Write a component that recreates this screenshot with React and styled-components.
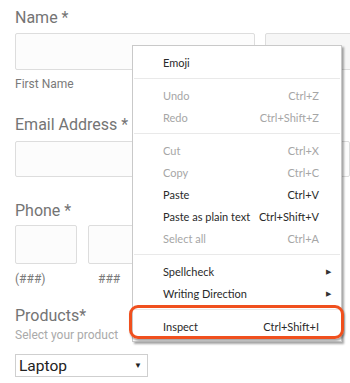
import styled, { createGlobalStyle } from 'styled-components'

const Global = createGlobalStyle`
  html, body {
    margin: 0;
    padding: 0;
    background: #fff;
    overflow: hidden;
  }
  body {
    width: 350px;
    height: 383px;
    font-family: Roboto, "Liberation Sans", sans-serif;
  }
`

const Page = styled.div`
  position: relative;
  width: 350px;
  height: 383px;
  overflow: hidden;
`

const Form = styled.div`
  display: flex;
  flex-direction: column;
  padding: 8px 0 0 15px;
`

const Label = styled.div`
  font-size: 16px;
  line-height: 20px;
  color: #747474;
  margin-top: ${p => p.top || 0}px;
`

const Row = styled.div`
  display: flex;
  gap: ${p => p.gap || 10}px;
  margin-top: ${p => p.top || 0}px;
`

const Box = styled.div`
  flex: none;
  width: ${p => p.w}px;
  height: ${p => p.h || 37}px;
  box-sizing: border-box;
  border: 1px solid #ddd;
  border-radius: 2px;
  background: ${p => p.shade ? '#f6f6f6' : '#fcfcfc'};
`

const Caption = styled.div`
  font-size: 12px;
  line-height: 14px;
  color: ${p => p.light ? '#aaa' : '#7a7a7a'};
  width: ${p => p.w ? p.w + 'px' : 'auto'};
`

const Select = styled.div`
  display: flex;
  align-items: center;
  justify-content: space-between;
  width: 133px;
  height: 23px;
  box-sizing: border-box;
  margin-top: 12px;
  padding: 0 5px 0 3px;
  border: 1px solid #cfcfcf;
  font-size: 15.5px;
  color: #222;
  span:last-child {
    font-size: 8px;
  }
`

const Menu = styled.div`
  position: absolute;
  left: 132px;
  top: 45px;
  width: 210px;
  box-sizing: border-box;
  padding: 5px 0 4px;
  background: #fff;
  border: 1px solid #c9c9c9;
  box-shadow: 2px 2px 2px rgba(0, 0, 0, 0.35);
  font-family: Lato, "Noto Sans", sans-serif;
  font-size: 11px;
  white-space: nowrap;
`

const Item = styled.div`
  display: flex;
  align-items: center;
  height: 22px;
  padding: 0 22px 0 30px;
  color: ${p => p.off ? '#a6a6a6' : '#2a2a2a'};
  span:first-child {
    flex: 1;
  }
`

const Arrow = styled.span`
  margin-right: -12px;
  font-size: 7px;
  color: #333;
`

const Sep = styled.div`
  height: 1px;
  margin: 5px 1px 5px;
  background: #e9e9e9;
`

const Ring = styled.div`
  position: absolute;
  left: 129px;
  top: 305px;
  width: 215px;
  height: 34px;
  box-sizing: border-box;
  border: 3px solid #f0501e;
  border-radius: 9px;
  box-shadow: 1px 2px 2px rgba(0, 0, 0, 0.35);
`

const menu = [
  [['Emoji']],
  [['Undo', 'Ctrl+Z', true], ['Redo', 'Ctrl+Shift+Z', true]],
  [
    ['Cut', 'Ctrl+X', true],
    ['Copy', 'Ctrl+C', true],
    ['Paste', 'Ctrl+V'],
    ['Paste as plain text', 'Ctrl+Shift+V'],
    ['Select all', 'Ctrl+A', true],
  ],
  [['Spellcheck', '', false, true], ['Writing Direction', '', false, true]],
  [['Inspect', 'Ctrl+Shift+I']],
]

const App = () => {
  return <Page>
    <Global />
    <Form>
      <Label>Name *</Label>
      <Row top={5}>
        <Box w={240} />
        <Box w={100} shade />
      </Row>
      <Caption style={{marginTop: 7}}>First Name</Caption>
      <Label top={24}>Email Address *</Label>
      <Row top={6}>
        <Box w={335} h={36} />
      </Row>
      <Label top={24}>Phone *</Label>
      <Row top={4} gap={11}>
        <Box w={62} h={39} />
        <Box w={62} h={39} />
      </Row>
      <Row top={8} gap={0}>
        <Caption w={73}>(###)</Caption>
        <Caption>###</Caption>
      </Row>
      <Label top={20}>Products*</Label>
      <Caption light style={{marginTop: 2}}>Select your product</Caption>
      <Select><span>Laptop</span><span>▼</span></Select>
    </Form>

    <Menu>
      {menu.map((group, i) => <div key={i}>
        {i > 0 && <Sep />}
        {group.map(([name, keys, off, sub]) => <Item key={name} off={off}>
          <span>{name}</span>
          {keys && <span>{keys}</span>}
          {sub && <Arrow>▶</Arrow>}
        </Item>)}
      </div>)}
    </Menu>
    <Ring />
  </Page>
}

export default App
